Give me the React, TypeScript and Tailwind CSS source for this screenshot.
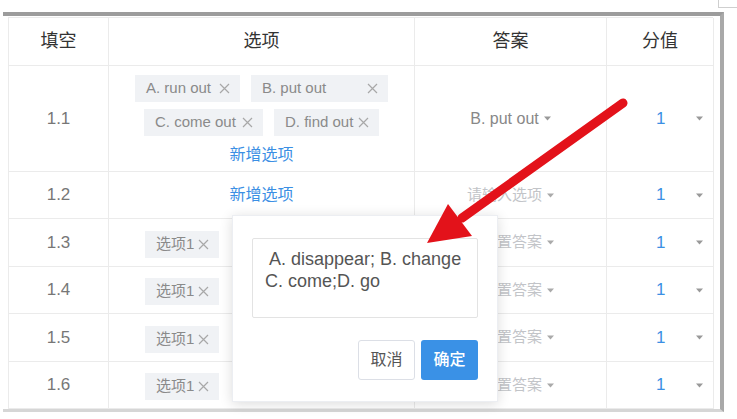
import React from 'react';

interface IRow {
	no: string;
	height: string;
	kind: 'multi' | 'add' | 'tag';
	answer: string;
	muted: boolean;
}

const rows: IRow[] = [
	{ no: '1.1', height: 'h-[106px]', kind: 'multi', answer: 'B. put out', muted: false },
	{ no: '1.2', height: 'h-[47px]', kind: 'add', answer: '请输入选项', muted: true },
	{ no: '1.3', height: 'h-[48px]', kind: 'tag', answer: '请设置答案', muted: true },
	{ no: '1.4', height: 'h-[47px]', kind: 'tag', answer: '请设置答案', muted: true },
	{ no: '1.5', height: 'h-[48px]', kind: 'tag', answer: '请设置答案', muted: true },
	{ no: '1.6', height: 'h-[47px]', kind: 'tag', answer: '请设置答案', muted: true },
];

const Close = () => (
	<svg width="11" height="11" viewBox="0 0 11 11" className="shrink-0">
		<path d="M1 1L10 10M10 1L1 10" stroke="#a8a8a8" strokeWidth="1.2" />
	</svg>
);

const Caret = ({ color = '#999' }: { color?: string }) => (
	<svg width="7" height="5" viewBox="0 0 7 5" className="shrink-0">
		<path d="M0 0.5H7L3.5 4.5Z" fill={color} />
	</svg>
);

const Tag = ({ label, width }: { label: string; width: string }) => (
	<div
		className={`${width} h-[27px] flex items-center justify-between pl-[11px] pr-[10px] bg-[#f0f2f5] text-[15px] text-[#8a8a8a]`}
	>
		<span>{label}</span>
		<Close />
	</div>
);

const cell = 'border-r border-b border-[#ebebeb] flex items-center justify-center';

const App = () => {
	return (
		<div className="relative w-[737px] h-[419px] bg-white overflow-hidden font-['Liberation_Sans','Noto_Sans_CJK_SC',sans-serif]">
			{/* corner of the window behind */}
			<div className="absolute left-[718px] top-0 w-[19px] h-[8px] border-l border-b border-[#cfcfcf]" />

			<div className="ml-[3px] mt-[12px] w-[721px] h-[400px] border-t-[4px] border-t-[#9c9c9c] border-r-[4px] border-r-[#a9a9a9] border-b-[3px] border-b-[#d6d6d6] bg-white pl-[5px] pt-[1px]">
				<div className="w-[705px] border-l border-t border-[#ebebeb]">
					<div className="grid grid-cols-[100px_306px_192px_107px] h-[48px] text-[18px] text-[#333]">
						<div className={cell}>填空</div>
						<div className={cell}>选项</div>
						<div className={cell}>答案</div>
						<div className={cell}>分值</div>
					</div>

					{rows.map((row) => (
						<div
							key={row.no}
							className={`grid grid-cols-[100px_306px_192px_107px] ${row.height}`}
						>
							<div className={`${cell} text-[17px] text-[#777]`}>{row.no}</div>

							{row.kind === 'multi' && (
								<div className="border-r border-b border-[#ebebeb] flex flex-col items-center pt-[9px]">
									<div className="flex gap-[11px]">
										<Tag label="A. run out" width="w-[105px]" />
										<Tag label="B. put out" width="w-[137px]" />
									</div>
									<div className="flex gap-[11px] mt-[7px]">
										<Tag label="C. come out" width="w-[119px]" />
										<Tag label="D. find out" width="w-[105px]" />
									</div>
									<div className="mt-[9px] text-[16px] leading-[20px] text-[#3b8fe4]">新增选项</div>
								</div>
							)}
							{row.kind === 'add' && (
								<div className={`${cell} text-[16px] text-[#3b8fe4]`}>新增选项</div>
							)}
							{row.kind === 'tag' && (
								<div className="border-r border-b border-[#ebebeb] flex items-center pl-[36px] pt-[3px]">
									<Tag label="选项1" width="w-[74px]" />
								</div>
							)}

							<div
								className={`${cell} gap-[5px] ${row.muted ? 'text-[15px] text-[#c2c4c8]' : 'text-[16px] text-[#888]'}`}
							>
								<span>{row.answer}</span>
								<Caret color={row.muted ? '#aaa' : '#999'} />
							</div>

							<div className="border-r border-b border-[#ebebeb] flex items-center justify-between pl-[49px] pr-[10px]">
								<span className="text-[17px] text-[#3b8fe4]">1</span>
								<Caret color="#999" />
							</div>
						</div>
					))}
				</div>
			</div>

			{/* popover editing the options */}
			<div className="absolute left-[232px] top-[215px] w-[266px] h-[187px] bg-white border border-[#eceef2] shadow-[0_2px_12px_rgba(0,0,0,0.14)] px-[19px] pt-[22px]">
				<div className="h-[80px] border border-[#e3e3e3] rounded-[2px] pl-[12px] pt-[9px] text-[18px] leading-[22px] text-[#555] whitespace-pre">
					{' A. disappear; B. change\nC. come;D. go'}
				</div>
				<div className="flex justify-end gap-[6px] mt-[22px]">
					<button className="w-[57px] h-[40px] border border-[#dcdfe6] rounded-[3px] bg-white text-[16px] text-[#555]">
						取消
					</button>
					<button className="w-[57px] h-[40px] rounded-[3px] bg-[#3a91e6] text-[16px] font-medium text-white">
						确定
					</button>
				</div>
			</div>

			{/* red annotation arrow */}
			<svg className="absolute left-0 top-0 pointer-events-none" width="737" height="419">
				<line x1="623" y1="103" x2="462" y2="218" stroke="#e3121a" strokeWidth="9" strokeLinecap="round" />
				<polygon points="427,243 448,204 472,236" fill="#e3121a" />
			</svg>
		</div>
	);
};

export default App;
